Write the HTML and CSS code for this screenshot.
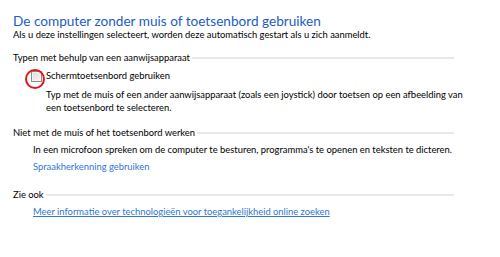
FILE: index.html
```html
<!DOCTYPE html>
<html lang="nl">
<head>
  <meta charset="UTF-8" />
  <title>De computer zonder muis of toetsenbord gebruiken</title>
  <link rel="stylesheet" href="styles.css">
</head>
<body>
  <div class="page">
    <h1>De computer zonder muis of toetsenbord gebruiken</h1>
    <p class="intro">Als u deze instellingen selecteert, worden deze automatisch gestart als u zich aanmeldt.</p>

    <div class="group first">
      <div class="group-title">Typen met behulp van een aanwijsapparaat</div>
      <label class="check-row">
        <span class="check-wrap">
          <span class="checkbox"></span>
          <span class="highlight"></span>
        </span>
        <span>Schermtoetsenbord gebruiken</span>
      </label>
      <p class="desc">Typ met de muis of een ander aanwijsapparaat (zoals een joystick) door toetsen op een afbeelding van een toetsenbord te selecteren.</p>
    </div>

    <div class="group">
      <div class="group-title">Niet met de muis of het toetsenbord werken</div>
      <p class="text">In een microfoon spreken om de computer te besturen, programma's te openen en teksten te dicteren.</p>
      <a class="link" href="#">Spraakherkenning gebruiken</a>
    </div>

    <div class="group last">
      <div class="group-title">Zie ook</div>
      <a class="link underline" href="#">Meer informatie over technologieën voor toegankelijkheid online zoeken</a>
    </div>
  </div>
</body>
</html>
```

FILE: styles.css
```css
* {
  margin: 0;
  padding: 0;
  box-sizing: border-box;
}

body {
  background: #fff;
  font-family: 'Lato', 'Open Sans', sans-serif;
  font-size: 9.4px;
  color: #000;
}

.page {
  width: 472px;
  padding: 15px 0 0 13px;
}

h1 {
  font-size: 13.6px;
  font-weight: normal;
  color: #1e5bc6;
  line-height: 13px;
}

.intro {
  line-height: 13px;
}

.group {
  margin-top: 12px;
}

.group.first {
  margin-top: 10px;
}

.group.last {
  margin-top: 14px;
}

.group-title {
  display: flex;
  align-items: center;
  line-height: 14px;
  margin-right: 18px;
}

.group-title::after {
  content: "";
  flex: 1;
  height: 2px;
  background: #e8e8e8;
  margin-left: 2px;
}

.check-row {
  display: flex;
  align-items: center;
  gap: 4px;
  margin: 4px 0 0 18px;
  line-height: 14px;
}

.check-wrap {
  position: relative;
  width: 11px;
  height: 11px;
}

.checkbox {
  display: block;
  width: 11px;
  height: 11px;
  border: 1px solid #8f8f8f;
  background: linear-gradient(135deg, #dcdcdc, #f4f4f4);
  box-shadow: inset 0 0 0 1px #f2f2f2;
}

.highlight {
  position: absolute;
  left: -6px;
  top: -2px;
  width: 20px;
  height: 20px;
  border: 2px solid #e0151b;
  border-radius: 50%;
}

.desc {
  margin: 5px 0 0 33px;
  line-height: 13px;
}

.text {
  margin: 3px 0 0 20px;
  line-height: 14px;
}

.link {
  display: inline-block;
  margin: 3px 0 0 20px;
  color: #2f77d2;
  text-decoration: none;
  line-height: 14px;
}

.link.underline {
  text-decoration: underline;
}
```
